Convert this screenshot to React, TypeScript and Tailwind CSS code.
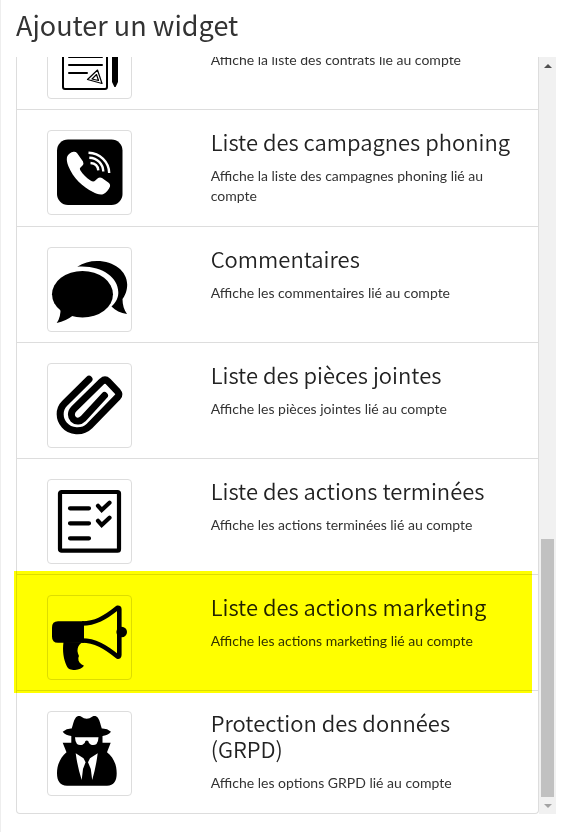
import type { ReactNode } from 'react';

interface Widget {
  id: string;
  title?: string;
  description: string;
  icon: ReactNode;
  highlighted?: boolean;
}

const ContractIcon = (
  <>
    <rect x="11" y="5" width="44" height="65" rx="2" fill="none" stroke="#000" strokeWidth="2" />
    <path
      d="M17 14H50M17 22H50M17 30H50M17 38H50M17 46H50M17 54H35"
      fill="none"
      stroke="#000"
      strokeWidth="2"
      strokeLinecap="round"
    />
    <path
      d="M45.5 51L35.5 60.5L50 64.5ZM44.5 55.5L40 60L46.5 61.5Z"
      fill="#fff"
      stroke="#000"
      strokeWidth="1.2"
      strokeLinejoin="round"
    />
    <path d="M60 10Q60 6 63 6Q66 6 66 10V63L63.6 68H62.4L60 63Z" />
  </>
);

const PhoneIcon = (
  <>
    <rect x="5" y="4.5" width="65.5" height="65.5" rx="11" />
    <path
      d="M15 22C16 19 19 17 21.5 16.7Q23.8 16.5 25 18L31 26.5Q32 28.5 30.5 30.5L28 33Q27.6 34 28.3 35.3C31 39.5 34 42.5 38.5 45.5Q41.5 47.3 43.3 45.5L45.5 43.5Q47.5 42 50 43L57 48Q58.6 49.5 58 51.5C57 54.5 54 58 51 59.3C47.5 60 44 58.6 41 57C31 52 21 43 16.3 31C15 27.5 14.5 25 15 22Z"
      fill="#fff"
    />
    <path
      d="M36.5 17.7C48 18 57 27 57.2 38M37.3 22.7C45.5 23 51 29 51.3 36.5M38.5 28C43 28.3 46 31 46.3 35.3"
      fill="none"
      stroke="#fff"
      strokeWidth="2.4"
    />
  </>
);

const CommentsIcon = (
  <>
    <ellipse cx="30.5" cy="42.3" rx="30.5" ry="23.3" />
    <path d="M8.5 56Q9 65 4.7 71Q14 69 21 63.5Z" />
    <path d="M25.3 14.8C31 11 38 9 45 9C62 9 75 19 75.2 32.5C75.2 39 73 43.5 70.5 47C70.5 53 72 58 75 62C68.5 61 63.5 58.5 59.5 54.5C64.5 50 66.5 45 66.3 40C66 25 49 13 25.3 14.8Z" />
  </>
);

const PaperclipIcon = (
  <path
    d="M37 11.3L12.5 35.5C6.5 41.5 7 51 12.3 57C18 63.8 30 65.3 37.5 58L65.7 29Q68 26.3 65.7 23.7L56 13.3Q53 10.7 50 13.3L22 40.8C18.3 44.5 19 49 21.3 51.3C24.3 54.2 28.5 53.3 31 50.8L52.5 27.5"
    fill="none"
    stroke="#000"
    strokeWidth="7"
    strokeLinecap="round"
    strokeLinejoin="round"
  />
);

const ChecklistIcon = (
  <>
    <rect x="8" y="8" width="59" height="58.7" rx="1.5" fill="none" stroke="#000" strokeWidth="4.2" />
    <path
      d="M18 24.3H37M18 39.3H37M18 54.3H37M46 21.8L49.7 26L57.5 18.7M46 36.8L49.7 41L57.5 33.7"
      fill="none"
      stroke="#000"
      strokeWidth="4.2"
      strokeLinecap="round"
    />
  </>
);

const MegaphoneIcon = (
  <>
    <path d="M6 21.3H32V42.7H6Q0 42.7 0 36.7V27.3Q0 21.3 6 21.3Z" />
    <path
      d="M30 23.5C43 23.5 53 18 65.5 7.8Q67.3 7.5 67.3 9V55Q67.3 57 65.5 56.5C53 46.5 43 40.5 30 40.5"
      fill="none"
      stroke="#000"
      strokeWidth="4.6"
    />
    <circle cx="69.7" cy="32" r="5.3" />
    <path d="M11.5 42C10.3 51 11.5 59 14.7 66C16 69.5 20 70 23 69.9C27 69.8 30 68.5 32 65.8C28 64 26 61.5 26.3 58Q27.5 55.5 26 53.5Q25 51.5 25.7 48.5Q26.5 44 31 42.3Z" />
  </>
);

const SpyIcon = (
  <>
    <path d="M10.7 15.7Q15 12.3 19.7 12.6C21 9 21.5 4.5 23.5 2C25 0 27 -.5 29 .5Q32 2.7 34.7 2.7Q37.5 2.7 40.5 .5C42.5 -.5 44.5 0 46 2C48 4.5 48.5 9 49.8 12.6Q55 12.3 59 15.7C57 18.5 53.5 19.5 50.5 20V26.7H58.7L55 36.3C61.5 41.5 64.7 48.5 64.7 57.3C64.7 65 62 69.7 55 69.7H15C8 69.7 5 65 5 57.3C5 48.5 8.5 41.5 14.5 36.3L10.7 26.7H19.3V20C16 19.5 12.5 18.5 10.7 15.7Z" />
    <path
      d="M23 21.2H46.5Q46.5 25 44.5 28Q42.5 29.7 39 28.8Q36.7 28 36.2 25Q34.7 23.8 33.4 25Q33 28 30.5 28.8Q27 29.7 25 28Q23 25 23 21.2Z"
      fill="#fff"
    />
    <path
      d="M23.7 37.3L31.5 42.2L33.6 46.3L31 53L29.7 64Q25.5 51 23.7 37.3ZM45.7 37.3L38 42.2L36 46.3L38.8 53L40.2 64Q44 51 45.7 37.3Z"
      fill="#fff"
    />
  </>
);

const WIDGETS: Widget[] = [
  {
    id: 'contracts',
    description: 'Affiche la liste des contrats lié au compte',
    icon: ContractIcon,
  },
  {
    id: 'phoning',
    title: 'Liste des campagnes phoning',
    description: 'Affiche la liste des campagnes phoning lié au compte',
    icon: PhoneIcon,
  },
  {
    id: 'comments',
    title: 'Commentaires',
    description: 'Affiche les commentaires lié au compte',
    icon: CommentsIcon,
  },
  {
    id: 'attachments',
    title: 'Liste des pièces jointes',
    description: 'Affiche les pièces jointes lié au compte',
    icon: PaperclipIcon,
  },
  {
    id: 'done-actions',
    title: 'Liste des actions terminées',
    description: 'Affiche les actions terminées lié au compte',
    icon: ChecklistIcon,
  },
  {
    id: 'marketing',
    title: 'Liste des actions marketing',
    description: 'Affiche les actions marketing lié au compte',
    icon: MegaphoneIcon,
    highlighted: true,
  },
  {
    id: 'gdpr',
    title: 'Protection des données (GRPD)',
    description: 'Affiche les options GRPD lié au compte',
    icon: SpyIcon,
  },
];

function WidgetItem({ widget }: { widget: Widget }) {
  return (
    <li className="relative border-t border-[#ddd] px-[15px] pt-[18px] pb-[10px]">
      <div className="grid grid-cols-12">
        <div className="col-span-4 px-[15px] pt-0.5">
          <div className="w-[85px] h-[85px] rounded border border-[#ddd] p-1">
            <svg viewBox="0 0 75 75" className="w-full h-full overflow-visible" aria-hidden="true">
              {widget.icon}
            </svg>
          </div>
        </div>
        <div className="col-span-8 pl-[15px] pr-2">
          {widget.title ? (
            <h3 className="mb-3 text-[22px] leading-[26px] font-[350] text-[#222] font-['Noto_Sans_CJK_SC',sans-serif]">
              {widget.title}
            </h3>
          ) : (
            <div className="mb-3 h-[26px]" />
          )}
          <p className="mb-[10px] text-sm leading-5">{widget.description}</p>
        </div>
      </div>

      {/* Marker stroke over the row */}
      {widget.highlighted && (
        <div className="absolute z-10 -top-1 -bottom-[3px] -left-[3px] right-[6px] bg-[#ff0] mix-blend-multiply pointer-events-none" />
      )}
    </li>
  );
}

function Scrollbar() {
  return (
    <div className="w-[17px] shrink-0 flex flex-col bg-[#f1f1f1]">
      <button type="button" aria-label="Défiler vers le haut" className="h-[17px] flex items-center justify-center">
        <svg viewBox="0 0 8 4" className="w-2 h-1" aria-hidden="true">
          <path d="M0 4L4 0L8 4Z" fill="#505050" />
        </svg>
      </button>
      <div className="flex-1 flex flex-col justify-end px-0.5">
        <div className="h-[258px] bg-[#c1c1c1]" />
      </div>
      <button type="button" aria-label="Défiler vers le bas" className="h-[17px] flex items-center justify-center">
        <svg viewBox="0 0 8 4" className="w-2 h-1" aria-hidden="true">
          <path d="M0 0L4 4L8 0Z" fill="#a3a3a3" />
        </svg>
      </button>
    </div>
  );
}

export default function App() {
  return (
    <main className="h-screen flex flex-col bg-white border-l border-[#eee] pb-[18px] text-[#333] font-[Lato,sans-serif]">
      <h2 className="shrink-0 h-[57px] pt-2 pl-[15px] text-[27px] leading-[34px] font-['Noto_Sans_CJK_SC',sans-serif]">
        Ajouter un widget
      </h2>

      <div className="flex-1 min-h-0 flex pr-[9px]">
        {/* List is scrolled to its end */}
        <div className="flex-1 min-w-0 flex flex-col justify-end overflow-hidden pl-[15px]">
          <ul className="border border-t-0 border-[#ddd] rounded-b">
            {WIDGETS.map((widget) => (
              <WidgetItem key={widget.id} widget={widget} />
            ))}
          </ul>
        </div>
        <Scrollbar />
      </div>
    </main>
  );
}
